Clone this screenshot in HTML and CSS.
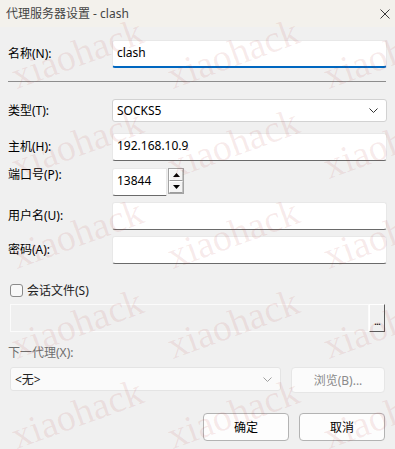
FILE: index.html
```html
<!DOCTYPE html>
<html lang="zh-CN">
<head>
    <meta charset="UTF-8">
    <meta name="viewport" content="width=device-width, initial-scale=1.0">
    <title>代理服务器设置 - clash</title>
    <link rel="stylesheet" href="styles.css">
</head>
<body>
<div class="window">
    <div class="titlebar">
        <span class="title">代理服务器设置 - clash</span>
        <span class="close">
            <svg width="10" height="10" viewBox="0 0 10 10"><path d="M0.5 0.5L9.5 9.5M9.5 0.5L0.5 9.5" stroke="#3a3a3a" stroke-width="1" fill="none"/></svg>
        </span>
    </div>

    <div class="dialog">
        <div class="row row-name">
            <label>名称(N):</label>
            <div class="textbox focused">clash</div>
        </div>

        <div class="separator"></div>

        <div class="row row-type">
            <label>类型(T):</label>
            <div class="select">
                <span>SOCKS5</span>
                <svg width="9" height="5" viewBox="0 0 9 5"><path d="M0.5 0.5L4.5 4.5L8.5 0.5" stroke="#333" stroke-width="1" fill="none"/></svg>
            </div>
        </div>

        <div class="row row-host">
            <label>主机(H):</label>
            <div class="textbox">192.168.10.9</div>
        </div>

        <div class="row row-port">
            <label>端口号(P):</label>
            <div class="port">
                <div class="textbox port-box">13844</div>
                <div class="spin">
                    <div class="spin-btn"><svg width="7" height="4" viewBox="0 0 7 4"><path d="M0 4L3.5 0L7 4Z" fill="#000"/></svg></div>
                    <div class="spin-btn"><svg width="7" height="4" viewBox="0 0 7 4"><path d="M0 0L7 0L3.5 4Z" fill="#000"/></svg></div>
                </div>
            </div>
        </div>

        <div class="row row-user">
            <label>用户名(U):</label>
            <div class="textbox"></div>
        </div>

        <div class="row row-pass">
            <label>密码(A):</label>
            <div class="textbox"></div>
        </div>

        <div class="check-row">
            <span class="checkbox"></span>
            <span class="check-label">会话文件(S)</span>
        </div>

        <div class="file-row">
            <div class="file-box"></div>
            <div class="file-btn">...</div>
        </div>

        <div class="next-label">下一代理(X):</div>

        <div class="next-row">
            <div class="combo">
                <span>&lt;无&gt;</span>
                <svg width="9" height="5" viewBox="0 0 9 5"><path d="M0.5 0.5L4.5 4.5L8.5 0.5" stroke="#a0a0a0" stroke-width="1" fill="none"/></svg>
            </div>
            <div class="browse">浏览(B)...</div>
        </div>

        <div class="actions">
            <button class="btn">确定</button>
            <button class="btn">取消</button>
        </div>
    </div>

    <!-- watermark tiles -->
    <div class="watermark">
        <span>xiaohack</span><span>xiaohack</span><span>xiaohack</span>
        <span>xiaohack</span><span>xiaohack</span><span>xiaohack</span>
        <span>xiaohack</span><span>xiaohack</span><span>xiaohack</span>
        <span>xiaohack</span><span>xiaohack</span><span>xiaohack</span>
        <span>xiaohack</span><span>xiaohack</span><span>xiaohack</span>
    </div>
</div>
</body>
</html>
```

FILE: styles.css
```css
* {
    box-sizing: border-box;
}
body {
    margin: 0;
    font-family: "Noto Sans", "Noto Sans CJK SC", sans-serif;
    font-size: 12px;
    color: #000;
    background: #f0f0f0;
}
.window {
    position: relative;
    width: 395px;
    height: 449px;
    overflow: hidden;
    background: #f0f0f0;
}
.titlebar {
    height: 27px;
    background: #f3f1ec;
    display: flex;
    align-items: center;
    justify-content: space-between;
    padding: 0 5px 0 6px;
}
.title {
    color: #444;
    font-size: 12px;
    line-height: 14px;
}
.close {
    display: flex;
}
.dialog {
    padding: 0 8px;
}
.row {
    display: grid;
    grid-template-columns: 104px 275px;
    align-items: center;
}
.row label {
    line-height: 14px;
}
.textbox {
    height: 28px;
    background: #fff;
    border: 1px solid #e8e8e8;
    border-bottom-color: #6a6a6a;
    border-radius: 3px;
    padding: 0 4px 3px;
    display: flex;
    align-items: center;
    color: #000;
}
.textbox.focused {
    border-bottom: 2px solid #0067c0;
}
.row-name {
    margin-top: 13px;
}
.separator {
    margin-top: 13px;
    width: 378px;
    border-top: 1px solid #8d8d8d;
}
.row-type {
    margin-top: 17px;
}
.select {
    height: 23px;
    background: #fff;
    border: 1px solid #d2d2d2;
    border-radius: 3px;
    padding: 0 8px 1px 4px;
    display: flex;
    align-items: center;
    justify-content: space-between;
}
.row-host {
    margin-top: 11px;
}
.row-port {
    margin-top: 7px;
    align-items: start;
}
.port {
    display: flex;
    align-items: flex-start;
}
.port-box {
    width: 55px;
    border-radius: 3px 0 0 3px;
}
.spin {
    width: 16px;
    height: 26px;
    margin-left: 1px;
    border: 1px solid #a3a3a3;
    display: flex;
    flex-direction: column;
}
.spin-btn {
    flex: 1;
    display: flex;
    align-items: center;
    justify-content: center;
    background: #f4f4f4;
    border: 1px solid #fff;
    border-right-color: #c4c4c4;
    border-bottom-color: #9c9c9c;
}
.row-user {
    margin-top: 6px;
}
.row-pass {
    margin-top: 6px;
}
.check-row {
    margin: 20px 0 0 2px;
    display: flex;
    align-items: center;
    height: 13px;
}
.checkbox {
    width: 13px;
    height: 13px;
    border: 1px solid #8a8a8a;
    border-radius: 3px;
    background: #f8f8f8;
}
.check-label {
    margin-left: 4px;
    color: #222;
    line-height: 14px;
}
.file-row {
    margin: 7px 0 0 2px;
    width: 375px;
    height: 28px;
    display: flex;
}
.file-box {
    flex: 1;
    border: 1px solid #fbfbfb;
    background: #efefef;
}
.file-btn {
    width: 16px;
    background: #f0f0f0;
    border-top: 1px solid #fff;
    border-left: 1px solid #fff;
    border-right: 1px solid #5a5a5a;
    border-bottom: 1px solid #5a5a5a;
    display: flex;
    align-items: flex-end;
    justify-content: center;
    padding-bottom: 5px;
    font-size: 11px;
    line-height: 11px;
    letter-spacing: -1px;
}
.next-label {
    margin-top: 14px;
    line-height: 14px;
    color: #6e6e6e;
}
.next-row {
    margin: 7px 0 0 2px;
    display: flex;
    align-items: flex-start;
    gap: 10px;
    width: 375px;
}
.combo {
    width: 271px;
    height: 24px;
    background: #fafafa;
    border: 1px solid #e4e4e4;
    border-radius: 3px;
    padding: 0 8px 0 4px;
    display: flex;
    align-items: center;
    justify-content: space-between;
    color: #222;
}
.browse {
    flex: 1;
    height: 26px;
    background: #fbfbfb;
    border: 1px solid #e6e6e6;
    border-radius: 4px;
    display: flex;
    align-items: center;
    justify-content: center;
    color: #8a8a8a;
}
.actions {
    margin: 20px 2px 0 0;
    display: flex;
    justify-content: flex-end;
    gap: 10px;
}
.btn {
    width: 86px;
    height: 28px;
    background: #fdfdfd;
    border: 1px solid #b3b3b3;
    border-radius: 4px;
    font-family: inherit;
    font-size: 12px;
    color: #000;
    padding: 0;
}
.watermark {
    position: absolute;
    inset: 0;
    pointer-events: none;
    display: grid;
    grid-template-columns: 156px 156px 156px;
    grid-auto-rows: 90px;
    padding: 57px 0 0 17px;
}
.watermark span {
    font-family: "Liberation Serif", serif;
    font-size: 38px;
    line-height: 38px;
    height: 38px;
    white-space: nowrap;
    color: rgba(180, 50, 50, 0.1);
    transform: rotate(-20deg);
    transform-origin: 0 32px;
}
```
